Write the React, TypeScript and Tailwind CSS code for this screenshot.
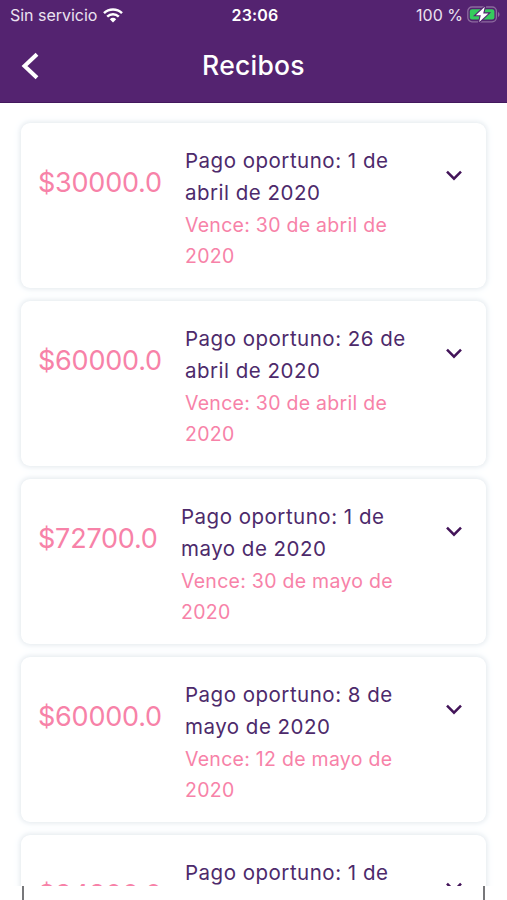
type Receipt = { amount: string; due: string; expires: string; amountWidth: string };

const receipts: Receipt[] = [
  { amount: '$30000.0', due: 'Pago oportuno: 1 de abril de 2020', expires: 'Vence: 30 de abril de 2020', amountWidth: 'w-[147px]' },
  { amount: '$60000.0', due: 'Pago oportuno: 26 de abril de 2020', expires: 'Vence: 30 de abril de 2020', amountWidth: 'w-[147px]' },
  { amount: '$72700.0', due: 'Pago oportuno: 1 de mayo de 2020', expires: 'Vence: 30 de mayo de 2020', amountWidth: 'w-[143px]' },
  { amount: '$60000.0', due: 'Pago oportuno: 8 de mayo de 2020', expires: 'Vence: 12 de mayo de 2020', amountWidth: 'w-[147px]' },
  { amount: '$34800.0', due: 'Pago oportuno: 1 de', expires: '', amountWidth: 'w-[147px]' },
];

function WifiIcon() {
  return (
    <svg className="ml-[6px] h-[15px] w-5" viewBox="0 0 20 15" fill="none" stroke="#fff" strokeWidth="2.5">
      <path d="M1 5.2C6.1.3 13.9.3 19 5.2" />
      <path d="M4.2 8.6c3.3-3.1 8.3-3.1 11.6 0" />
      <path d="M6.8 11.2a4.7 4.7 0 0 1 6.4 0L10 14.6Z" fill="#fff" stroke="none" />
    </svg>
  );
}

function BatteryIcon() {
  return (
    <svg className="mt-[-2px] ml-1 h-[17px] w-[33px]" viewBox="0 0 33 17">
      <rect x="0.8" y="1" width="28.6" height="14.8" rx="4.2" fill="none" stroke="#8c6a9e" strokeWidth="1.3" />
      <path d="M31 6v5c2-.7 2-4.3 0-5Z" fill="#8c6a9e" />
      <rect x="2.8" y="3.2" width="24.6" height="10.4" rx="2.3" fill="#35cc5d" />
      <path d="M17.8.8 8.8 9.2h5L12.2 16l9.2-8.6h-5.2Z" fill="#fff" stroke="#542370" strokeWidth="2.2" paintOrder="stroke" />
    </svg>
  );
}

function ReceiptCard({ amount, due, expires, amountWidth }: Receipt) {
  return (
    <article className="flex h-[165px] shrink-0 rounded-[9px] bg-white pr-[23px] pl-[17px] shadow-[0_0_4px_1px_#e6ebef,0_0_8px_3px_#f8fbfd]">
      <div className={`${amountWidth} shrink-0 pt-[40px] text-[27px] leading-10 tracking-[-0.23px] text-[#f782a8]`}>{amount}</div>
      <div className="w-[225px] shrink-0 pt-[22px]">
        <p className="text-[20.5px] leading-8 tracking-[0.5px] text-[#4d2a6b]">{due}</p>
        <p className="pt-px text-[19.5px] leading-[31px] tracking-[0.27px] text-[#f782a8]">{expires}</p>
      </div>
      <svg className="mt-[47px] ml-auto h-3 w-[18px]" viewBox="0 0 18 12" fill="none" stroke="#431459" strokeWidth="2.5">
        <path d="m2 1.7 7 7 7-7" />
      </svg>
    </article>
  );
}

export default function App() {
  return (
    <main className="flex h-[900px] w-[507px] flex-col overflow-hidden bg-white font-['Inter',sans-serif]">
      <header className="h-[103px] shrink-0 border-b border-[#43185d] bg-[#542370] text-white">
        <div className="grid h-[30px] grid-cols-[1fr_auto_1fr] items-center pr-[7px] pl-[10px] text-[16px] leading-[30px]">
          <div className="flex items-center text-[#ebe2f0]"><span className="tracking-[-0.02px]">Sin servicio</span><WifiIcon /></div>
          <div className="font-semibold tracking-[0.2px]">23:06</div>
          <div className="flex items-center justify-end text-[#ebe2f0]">100 %<BatteryIcon /></div>
        </div>
        <div className="grid h-[72px] grid-cols-[60px_1fr_60px] items-center">
          <svg className="ml-[20px] h-[30px] w-5" viewBox="0 0 20 30" fill="none" stroke="#fff" strokeWidth="4">
            <path d="M17 3.2 4.5 15 17 26.8" />
          </svg>
          <h1 className="text-center text-[26.5px] font-medium tracking-[0.25px]">Recibos</h1>
        </div>
      </header>
      <section className="flex h-[783px] shrink-0 flex-col gap-[13px] overflow-hidden bg-white px-[21px] pt-5">
        {receipts.map((receipt, i) => <ReceiptCard key={i} {...receipt} />)}
      </section>
      <footer className="mx-[22px] h-[14px] shrink-0 border-x-2 border-[#77777a] bg-white" />
    </main>
  );
}
